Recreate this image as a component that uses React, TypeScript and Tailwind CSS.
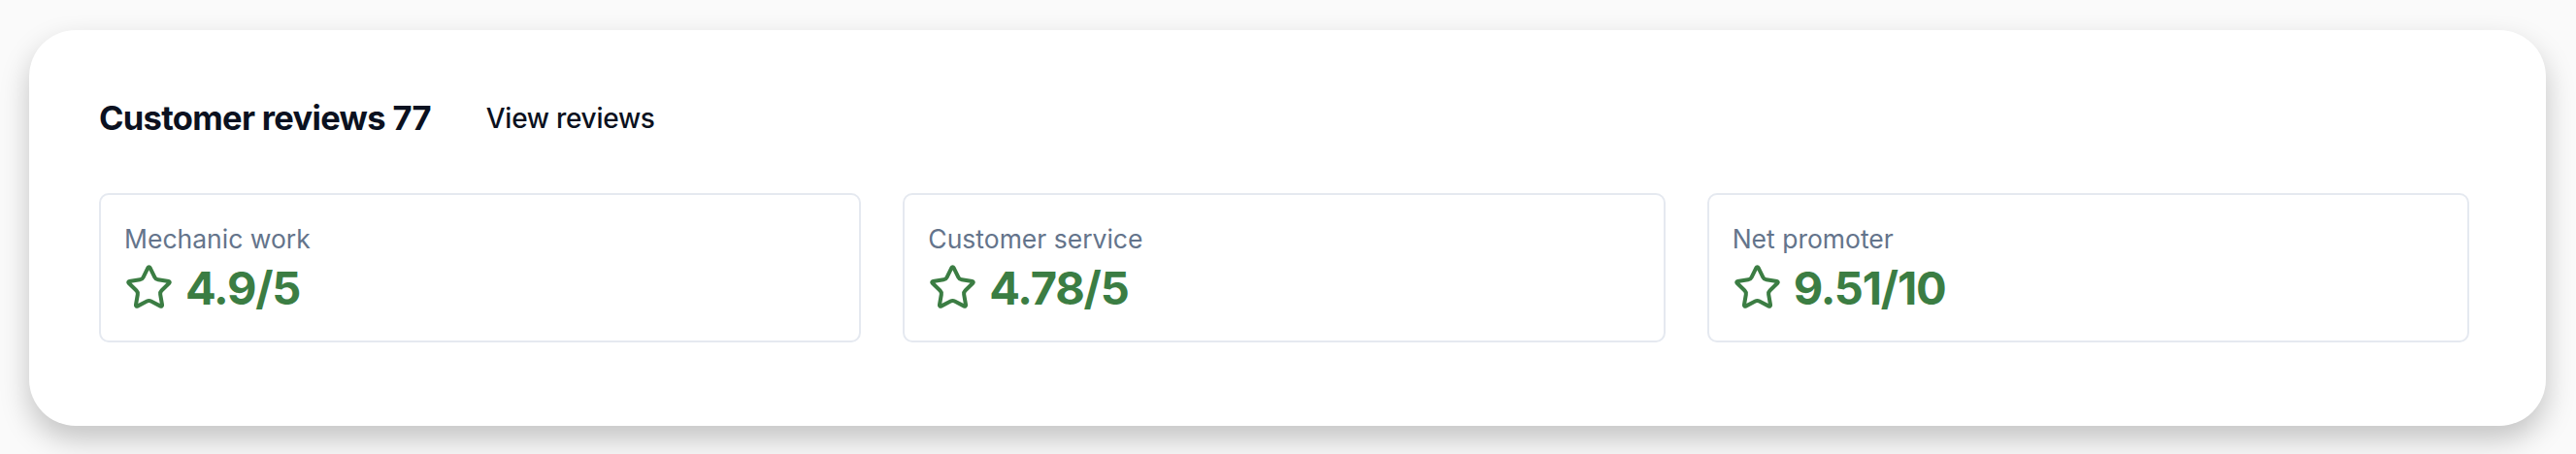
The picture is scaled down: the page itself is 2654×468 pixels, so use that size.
import React from "react";

function Star() {
  return (
    <svg width="51" height="51" viewBox="0 0 24 24" fill="none" stroke="currentColor" strokeWidth="1.9" strokeLinecap="round" strokeLinejoin="round" className="shrink-0">
      <path d="M11.525 2.295a.53.53 0 0 1 .95 0l2.31 4.679a2.123 2.123 0 0 0 1.595 1.16l5.166.756a.53.53 0 0 1 .294.904l-3.736 3.638a2.123 2.123 0 0 0-.611 1.878l.882 5.14a.53.53 0 0 1-.771.56l-4.618-2.428a2.122 2.122 0 0 0-1.973 0L6.396 21.01a.53.53 0 0 1-.77-.56l.881-5.139a2.122 2.122 0 0 0-.611-1.879L2.16 9.795a.53.53 0 0 1 .294-.906l5.165-.755a2.122 2.122 0 0 0 1.597-1.16z" />
    </svg>
  );
}

const stats = [
  { label: "Mechanic work", value: "4.9/5" },
  { label: "Customer service", value: "4.78/5" },
  { label: "Net promoter", value: "9.51/10" },
];

export default function App() {
  return (
    <div className="min-h-[468px] w-full bg-[#fafafa] pt-[31px] pl-[30px] pr-[31px] font-['Inter','Liberation_Sans',sans-serif]">
      <div className="rounded-[48px] bg-white shadow-[0_14px_30px_rgba(0,0,0,0.22)] pl-[72px] pr-[79px] pt-[70px] pb-[86px]">
        <div className="flex items-center h-[42px]">
          <h2 className="text-[34.5px] font-bold tracking-[-0.02em] text-[#0b1120] leading-none">Customer reviews 77</h2>
          <span className="ml-[57px] text-[28px] font-medium text-[#0b1120] leading-none tracking-[-0.01em]">View reviews</span>
        </div>
        <div className="mt-[56px] grid grid-cols-3 gap-[43px]">
          {stats.map((s) => (
            <div key={s.label} className="h-[154px] rounded-[10px] border-2 border-[#e5e9f0] px-[24px] pt-[26px]">
              <div className="text-[26.5px] leading-[38px] text-[#64748b]">{s.label}</div>
              <div className="mt-[6px] flex items-center gap-[12px] text-[#3b7d43]">
                <Star />
                <span className="text-[47px] font-bold leading-none tracking-[-0.025em]">{s.value}</span>
              </div>
            </div>
          ))}
        </div>
      </div>
    </div>
  );
}
